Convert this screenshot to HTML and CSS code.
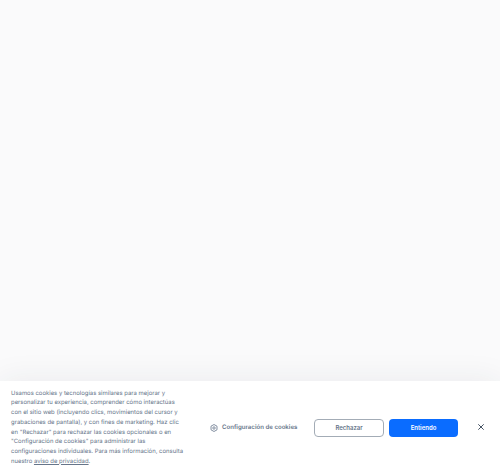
FILE: index.html
```html
<!DOCTYPE html>
<html lang="es">
<head>
    <meta charset="UTF-8">
    <meta name="viewport" content="width=device-width, initial-scale=1.0">
    <title>Aviso de cookies</title>
    <link rel="stylesheet" href="styles.css">
</head>
<body>
    <div class="page-area"></div>
    <div class="cookie-banner">
        <p class="cookie-text">Usamos cookies y tecnologías similares para mejorar y<br>personalizar tu experiencia, comprender cómo interactúas<br>con el sitio web (incluyendo clics, movimientos del cursor y<br>grabaciones de pantalla), y con fines de marketing. Haz clic<br>en "Rechazar" para rechazar las cookies opcionales o en<br>"Configuración de cookies" para administrar las<br>configuraciones individuales. Para más información, consulta<br>nuestro <a href="#">aviso de privacidad</a>.</p>
        <div class="cookie-actions">
            <a class="cookie-settings" href="#">
                <svg class="settings-icon" viewBox="0 0 16 16" width="8" height="8" fill="none" stroke="#66758a" stroke-width="1.6">
                    <path d="M8 1l6 3.4v7.2L8 15l-6-3.4V4.4z"/>
                    <circle cx="8" cy="8" r="2.4"/>
                </svg>
                <span>Configuración de cookies</span>
            </a>
            <button class="btn btn-reject">Rechazar</button>
            <button class="btn btn-accept">Entiendo</button>
            <button class="btn-close" aria-label="Cerrar">
                <svg viewBox="0 0 10 10" width="6" height="6" stroke="#3d4a5c" stroke-width="1.6" fill="none">
                    <path d="M.5.5l9 9M9.5.5l-9 9"/>
                </svg>
            </button>
        </div>
    </div>
</body>
</html>
```

FILE: styles.css
```css
:root {
    --primary-color: #0a6cff;
    --text-color: #66758a;
}

body, html {
    height: 100%;
    margin: 0;
    font-family: Inter, "Liberation Sans", sans-serif;
    text-rendering: geometricPrecision;
    background-color: #fafafb;
    color: var(--text-color);
}

body {
    display: flex;
    flex-direction: column;
}

.page-area {
    flex: 1;
}

.cookie-banner {
    display: flex;
    align-items: center;
    height: 93px;
    padding: 0 16px 0 11px;
    box-sizing: border-box;
    background-color: #ffffff;
    box-shadow: 0 0 30px rgba(40, 50, 70, 0.08);
}

.cookie-text {
    flex: none;
    width: 174px;
    margin: 0;
    font-size: 5.95px;
    line-height: 9.7px;
    white-space: nowrap;
}

.cookie-text a {
    color: inherit;
}

.cookie-actions {
    display: flex;
    flex: 1;
    align-items: center;
    margin-left: 25px;
}

.cookie-settings {
    display: flex;
    align-items: center;
    gap: 4px;
    width: 88px;
    font-size: 6.1px;
    font-weight: 600;
    color: var(--text-color);
    text-decoration: none;
    white-space: nowrap;
}

.btn {
    height: 18px;
    padding: 0;
    border-radius: 4px;
    font-family: inherit;
    font-size: 6px;
    font-weight: 600;
    cursor: pointer;
}

.btn-reject {
    width: 70px;
    margin-left: 16px;
    border: 1px solid #a3acb6;
    background-color: #ffffff;
    color: var(--text-color);
}

.btn-accept {
    width: 69px;
    margin-left: 5px;
    border: none;
    background-color: var(--primary-color);
    color: #ffffff;
}

.btn-close {
    display: flex;
    width: 6px;
    height: 6px;
    margin: 0 0 2px 20px;
    padding: 0;
    border: none;
    background: none;
    cursor: pointer;
}
```
